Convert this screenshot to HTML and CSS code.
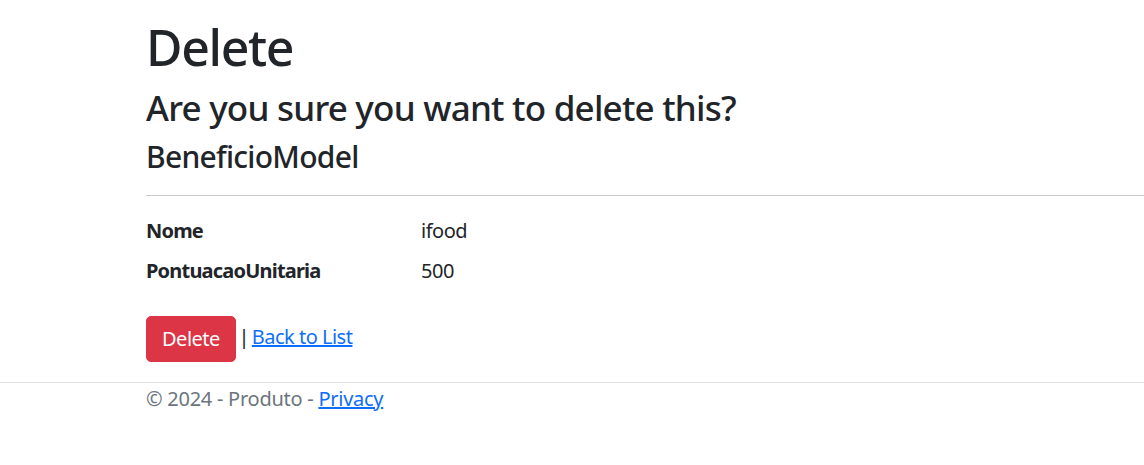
FILE: index.html
```html
<!DOCTYPE html>
<html lang="pt">
<head>
<meta charset="utf-8">
<title>Delete - Produto</title>
<link rel="stylesheet" href="styles.css">
</head>
<body>
<div class="page">
  <main class="main">
    <h1 class="title">Delete</h1>
    <h3 class="subtitle">Are you sure you want to delete this?</h3>
    <div>
      <h4 class="model">BeneficioModel</h4>
      <hr class="rule">
      <dl class="details">
        <dt>Nome</dt>
        <dd>ifood</dd>
        <dt>PontuacaoUnitaria</dt>
        <dd>500</dd>
      </dl>
      <form class="actions">
        <button type="button" class="btn-danger">Delete</button> | <a href="#" class="link">Back to List</a>
      </form>
    </div>
  </main>
</div>
<footer class="footer">
  <div class="footer-inner">&copy; 2024 - Produto - <a href="#" class="link">Privacy</a></div>
</footer>
</body>
</html>
```
FILE: styles.css
```css
html, body {
  margin: 0;
  padding: 0;
  background: #fff;
}
body {
  font-family: "Noto Sans", "Open Sans", sans-serif;
  font-size: 20px;
  line-height: 1.5;
  color: #212529;
  letter-spacing: -0.025em;
  overflow: hidden;
}
.page {
  padding: 17px 0 0 146px;
}
.main {
  padding-bottom: 20px;
}
h1, h3, h4 {
  margin: 0 0 10px 0;
  font-weight: 500;
  line-height: 1.2;
}
.title {
  font-size: 50px;
  letter-spacing: -0.027em;
}
.subtitle {
  font-size: 35px;
  letter-spacing: -0.022em;
}
.model {
  font-size: 30px;
  letter-spacing: -0.024em;
}
.rule {
  margin: 20px 0;
  border: 0;
  border-top: 1px solid #c8c9ca;
  height: 0;
}
.details {
  display: grid;
  grid-template-columns: 275px 1fr;
  margin: 0 0 20px 0;
}
.details dt {
  font-weight: 700;
  letter-spacing: -0.04em;
  margin: 0;
}
.details dd {
  margin: 0 0 10px 0;
}
.actions {
  margin: 0;
  word-spacing: -2px;
}
.actions .link {
  word-spacing: 0;
}
.btn-danger {
  font-family: inherit;
  font-size: 20px;
  line-height: 1.5;
  letter-spacing: -0.025em;
  color: #fff;
  background: #dc3545;
  border: 1px solid #dc3545;
  border-radius: 5px;
  padding: 7px 15px;
  cursor: pointer;
  vertical-align: middle;
}
.link {
  color: #0d6efd;
  text-decoration: underline;
}
.footer {
  border-top: 1px solid #dee2e6;
  color: #6c757d;
  letter-spacing: -0.013em;
}
.footer-inner {
  padding-left: 146px;
  padding-top: 1px;
}
```
